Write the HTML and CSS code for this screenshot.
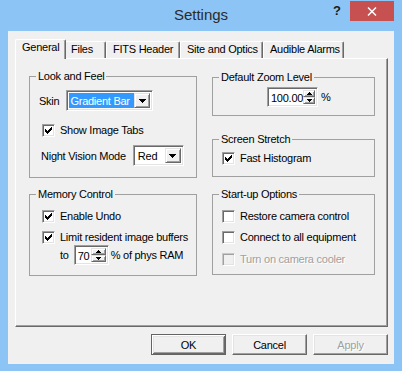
FILE: index.html
```html
<!DOCTYPE html>
<html lang="en">
<head>
    <meta charset="UTF-8">
    <title>Settings</title>
    <link rel="stylesheet" href="styles.css">
</head>
<body>

    <div class="window">
        <div class="titlebar">
            <span></span>
            <div class="title">Settings</div>
            <div class="caption-buttons">
                <span class="help-btn">?</span>
                <span class="close-btn">
                    <svg width="10" height="9" viewBox="0 0 10 9"><path d="M1 0.5 L9 8.5 M9 0.5 L1 8.5" stroke="#fff" stroke-width="1.5" fill="none"/></svg>
                </span>
            </div>
        </div>

        <div class="client">
            <div class="tabs">
                <div class="tab tab-general selected">General</div>
                <div class="tab tab-files">Files</div>
                <div class="tab tab-fits">FITS Header</div>
                <div class="tab tab-site">Site and Optics</div>
                <div class="tab tab-alarms">Audible Alarms</div>
            </div>

            <div class="tab-panel">
                <div class="column column-left">
                    <div class="group group-look">
                        <div class="group-title">Look and Feel</div>
                        <div class="row row-skin">
                            <span>Skin</span>
                            <div class="combo combo-skin">
                                <span class="combo-value highlighted">Gradient Bar</span>
                                <span class="drop"><svg width="7" height="4" viewBox="0 0 7 4"><path d="M0 0h7v1h-1v1h-1v1h-1v1h-1v-1h-1v-1h-1v-1h-1z" fill="#000"/></svg></span>
                            </div>
                        </div>
                        <div class="check-row row-tabs">
                            <span class="check"><svg width="7" height="7" viewBox="0 0 7 7"><path d="M0 2h1v3h-1zM1 3h1v3h-1zM2 4h1v3h-1zM3 3h1v3h-1zM4 2h1v3h-1zM5 1h1v3h-1zM6 0h1v3h-1z" fill="#000"/></svg></span>
                            <span>Show Image Tabs</span>
                        </div>
                        <div class="row row-night">
                            <span>Night Vision Mode</span>
                            <div class="combo combo-night">
                                <span class="combo-value">Red</span>
                                <span class="drop"><svg width="7" height="4" viewBox="0 0 7 4"><path d="M0 0h7v1h-1v1h-1v1h-1v1h-1v-1h-1v-1h-1v-1h-1z" fill="#000"/></svg></span>
                            </div>
                        </div>
                    </div>

                    <div class="group group-memory">
                        <div class="group-title">Memory Control</div>
                        <div class="check-row row-undo">
                            <span class="check"><svg width="7" height="7" viewBox="0 0 7 7"><path d="M0 2h1v3h-1zM1 3h1v3h-1zM2 4h1v3h-1zM3 3h1v3h-1zM4 2h1v3h-1zM5 1h1v3h-1zM6 0h1v3h-1z" fill="#000"/></svg></span>
                            <span>Enable Undo</span>
                        </div>
                        <div class="check-row row-limit">
                            <span class="check"><svg width="7" height="7" viewBox="0 0 7 7"><path d="M0 2h1v3h-1zM1 3h1v3h-1zM2 4h1v3h-1zM3 3h1v3h-1zM4 2h1v3h-1zM5 1h1v3h-1zM6 0h1v3h-1z" fill="#000"/></svg></span>
                            <span>Limit resident image buffers</span>
                        </div>
                        <div class="row row-to">
                            <span>to</span>
                            <div class="spin spin-ram">
                                <span class="spin-value">70</span>
                                <span class="spin-btns">
                                    <span class="spin-btn"><svg width="5" height="3" viewBox="0 0 5 3"><path d="M2 0h1v1h1v1h1v1h-5v-1h1v-1h1z" fill="#000"/></svg></span>
                                    <span class="spin-btn"><svg width="5" height="3" viewBox="0 0 5 3"><path d="M0 0h5v1h-1v1h-1v1h-1v-1h-1v-1h-1z" fill="#000"/></svg></span>
                                </span>
                            </div>
                            <span class="unit">% of phys RAM</span>
                        </div>
                    </div>
                </div>

                <div class="column column-right">
                    <div class="group group-zoom">
                        <div class="group-title">Default Zoom Level</div>
                        <div class="row row-zoom">
                            <div class="spin spin-zoom">
                                <span class="spin-value">100.00</span>
                                <span class="spin-btns">
                                    <span class="spin-btn"><svg width="5" height="3" viewBox="0 0 5 3"><path d="M2 0h1v1h1v1h1v1h-5v-1h1v-1h1z" fill="#000"/></svg></span>
                                    <span class="spin-btn"><svg width="5" height="3" viewBox="0 0 5 3"><path d="M0 0h5v1h-1v1h-1v1h-1v-1h-1v-1h-1z" fill="#000"/></svg></span>
                                </span>
                            </div>
                            <span class="unit">%</span>
                        </div>
                    </div>

                    <div class="group group-stretch">
                        <div class="group-title">Screen Stretch</div>
                        <div class="check-row row-fast">
                            <span class="check"><svg width="7" height="7" viewBox="0 0 7 7"><path d="M0 2h1v3h-1zM1 3h1v3h-1zM2 4h1v3h-1zM3 3h1v3h-1zM4 2h1v3h-1zM5 1h1v3h-1zM6 0h1v3h-1z" fill="#000"/></svg></span>
                            <span>Fast Histogram</span>
                        </div>
                    </div>

                    <div class="group group-startup">
                        <div class="group-title">Start-up Options</div>
                        <div class="check-row row-restore">
                            <span class="check"></span>
                            <span>Restore camera control</span>
                        </div>
                        <div class="check-row row-connect">
                            <span class="check"></span>
                            <span>Connect to all equipment</span>
                        </div>
                        <div class="check-row row-cooler disabled">
                            <span class="check"></span>
                            <span>Turn on camera cooler</span>
                        </div>
                    </div>
                </div>
            </div>

            <div class="buttons">
                <button class="btn btn-default">OK</button>
                <button class="btn">Cancel</button>
                <button class="btn" disabled>Apply</button>
            </div>
        </div>
    </div>

</body>
</html>
```

FILE: styles.css
```css
body {
    font-family: 'Liberation Sans', Arial, sans-serif;
    font-size: 11px;
    letter-spacing: -0.25px;
    margin: 0;
    padding: 0;
    color: #000;
    background-color: #8cc5f5;
}

.window {
    width: 402px;
    height: 371px;
    display: flex;
    flex-direction: column;
}

/* title bar */
.titlebar {
    height: 31px;
    flex-shrink: 0;
    display: grid;
    grid-template-columns: 1fr auto 1fr;
}

.title {
    font-size: 15px;
    letter-spacing: 0;
    line-height: 30px;
    color: #2b2b2b;
}

.caption-buttons {
    display: flex;
    justify-content: flex-end;
    align-items: flex-start;
    padding-right: 8px;
}

.help-btn {
    width: 26px;
    height: 21px;
    line-height: 21px;
    text-align: center;
    font-size: 13px;
    font-weight: bold;
    letter-spacing: 0;
    color: #1a1a1a;
}

.close-btn {
    width: 44px;
    height: 20px;
    margin-top: 1px;
    background: #c75050;
    display: flex;
    justify-content: center;
    align-items: center;
}

/* dialog body */
.client {
    flex: 1;
    margin: 0 8px 7px 8px;
    padding: 8px 6px 0 7px;
    background: #f0f0f0;
    display: flex;
    flex-direction: column;
}

.tabs {
    height: 19px;
    display: flex;
    align-items: flex-end;
    padding-left: 2px;
}

.tab {
    box-sizing: border-box;
    height: 17px;
    padding: 1px 0 0 6px;
    line-height: 13px;
    white-space: nowrap;
    border-top: 1px solid #fff;
    border-left: 1px solid #fff;
    border-right: 1px solid #696969;
    border-radius: 2px 2px 0 0;
    box-shadow: inset -1px 0 #a0a0a0;
    background: #f0f0f0;
}

.tab.selected {
    height: 20px;
    margin: 0 -2px -1px -2px;
    position: relative;
    z-index: 1;
}

.tab-general { width: 47px; }
.tab-general.selected { width: 51px; }
.tab-files { width: 42px; }
.tab-fits { width: 74px; }
.tab-site { width: 83px; }
.tab-alarms { width: 81px; }

.tab-panel {
    box-sizing: border-box;
    height: 269px;
    flex-shrink: 0;
    border: 1px solid;
    border-color: #fff #696969 #696969 #fff;
    box-shadow: inset -1px -1px #a0a0a0;
    padding: 0 12px 0 13px;
    display: flex;
    gap: 15px;
}

.column {
    display: flex;
    flex-direction: column;
}

.column-left {
    width: 168px;
    padding-top: 17px;
}

.column-right {
    width: 163px;
    padding-top: 18px;
}

/* group boxes */
.group {
    box-sizing: border-box;
    border: 1px solid #a0a0a0;
    display: flex;
    flex-direction: column;
}

.group-title {
    width: fit-content;
    margin: -7px 0 0 6px;
    padding: 0 2px;
    line-height: 13px;
    background: #f0f0f0;
}

.group-look { height: 102px; }
.group-memory { height: 82px; margin-top: 16px; }
.group-zoom { height: 39px; }
.group-stretch { height: 38px; margin-top: 23px; }
.group-startup { height: 81px; margin-top: 17px; }

.row {
    display: flex;
    align-items: center;
}

.check-row {
    display: flex;
    align-items: center;
    height: 13px;
    line-height: 13px;
    gap: 5px;
}

.row-skin { height: 21px; margin-top: 7px; padding-left: 9px; gap: 7px; }
.row-tabs { margin-top: 13px; padding-left: 12px; }
.row-night { height: 21px; margin-top: 8px; padding-left: 11px; gap: 7px; }

.row-undo { margin-top: 9px; padding-left: 12px; }
.row-limit { margin-top: 8px; padding-left: 12px; }
.row-to { height: 20px; margin-top: 1px; padding-left: 30px; gap: 5px; }
.row-to .unit { margin-left: -3px; }

.row-zoom { height: 20px; margin-top: 3px; padding-left: 54px; gap: 3px; }
.row-fast { margin-top: 6px; padding-left: 9px; }
.row-restore { margin-top: 9px; padding-left: 9px; }
.row-connect { margin-top: 8px; padding-left: 9px; }
.row-cooler { margin-top: 9px; padding-left: 9px; }

/* classic controls */
.check {
    box-sizing: border-box;
    width: 13px;
    height: 13px;
    flex-shrink: 0;
    border: 1px solid;
    border-color: #a0a0a0 #fff #fff #a0a0a0;
    box-shadow: inset 1px 1px #696969, inset -1px -1px #e3e3e3;
    background: #fff;
    display: flex;
    justify-content: center;
    align-items: center;
}

.check svg {
    shape-rendering: crispEdges;
}

.disabled {
    color: #a0a0a0;
    text-shadow: 1px 1px #fff;
}

.disabled .check {
    background: #f0f0f0;
    border-color: #c8c8c8 #fff #fff #c8c8c8;
    box-shadow: inset 1px 1px #a0a0a0, inset -1px -1px #e3e3e3;
}

.combo,
.spin {
    box-sizing: border-box;
    height: 21px;
    border: 1px solid;
    border-color: #a0a0a0 #fff #fff #a0a0a0;
    box-shadow: inset 1px 1px #696969, inset -1px -1px #e3e3e3;
    background: #fff;
    padding: 2px;
    display: flex;
}

.combo-skin { width: 87px; }
.combo-night { width: 51px; }

.combo-value {
    flex: 1;
    line-height: 17px;
    padding-left: 2px;
    white-space: nowrap;
}

.combo-value.highlighted {
    background: #3399ff;
    color: #fff;
    padding-left: 1px;
}

.drop {
    box-sizing: border-box;
    width: 16px;
    border: 1px solid;
    border-color: #e3e3e3 #696969 #696969 #e3e3e3;
    box-shadow: inset 1px 1px #fff, inset -1px -1px #a0a0a0;
    background: #f0f0f0;
    display: flex;
    justify-content: center;
    align-items: center;
}

.drop svg,
.spin-btn svg {
    shape-rendering: crispEdges;
}

.spin {
    height: 20px;
}

.spin-zoom { width: 51px; }
.spin-ram { width: 35px; }

.spin-value {
    flex: 1;
    line-height: 16px;
    padding-left: 1px;
}

.spin-btns {
    width: 15px;
    display: flex;
    flex-direction: column;
}

.spin-btn {
    box-sizing: border-box;
    flex: 1;
    border: 1px solid;
    border-color: #e3e3e3 #696969 #696969 #e3e3e3;
    box-shadow: inset 1px 1px #fff, inset -1px -1px #a0a0a0;
    background: #f0f0f0;
    display: flex;
    justify-content: center;
    align-items: center;
}

/* dialog buttons */
.buttons {
    margin-top: 7px;
    display: flex;
    justify-content: flex-end;
    gap: 6px;
}

.btn {
    box-sizing: border-box;
    width: 75px;
    height: 21px;
    padding: 0;
    font-family: inherit;
    font-size: 11px;
    letter-spacing: inherit;
    color: #000;
    background: #f0f0f0;
    border: 1px solid;
    border-color: #fff #696969 #696969 #fff;
    box-shadow: inset -1px -1px #a0a0a0, inset 1px 1px #e3e3e3;
}

.btn-default {
    border: 1px solid #646464;
    box-shadow: inset 1px 1px #fff, inset -1px -1px #696969, inset 2px 2px #e3e3e3, inset -2px -2px #a0a0a0;
}

.btn:disabled {
    color: #a0a0a0;
    text-shadow: 1px 1px #fff;
}
```
